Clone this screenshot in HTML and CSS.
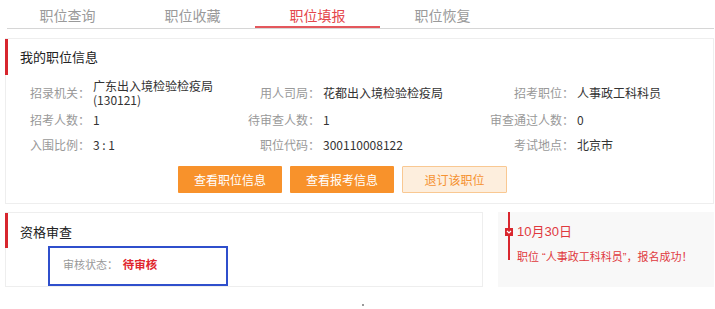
FILE: index.html
```html
<html>
<head>
<meta charset="utf-8">
<link rel="stylesheet" href="styles.css">
</head>
<body>
  <div class="tabs">
    <div class="tab-list">
      <a class="tab">职位查询</a>
      <a class="tab">职位收藏</a>
      <a class="tab active">职位填报</a>
      <a class="tab">职位恢复</a>
    </div>
  </div>

  <div class="card">
    <div class="card-title">我的职位信息</div>
    <div class="info-grid">
      <span class="lbl">招录机关：</span>
      <span class="val">广东出入境检验检疫局(130121)</span>
      <span class="lbl">用人司局：</span>
      <span class="val">花都出入境检验检疫局</span>
      <span class="lbl">招考职位：</span>
      <span class="val">人事政工科科员</span>

      <span class="lbl">招考人数：</span>
      <span class="val">1</span>
      <span class="lbl">待审查人数：</span>
      <span class="val">1</span>
      <span class="lbl">审查通过人数：</span>
      <span class="val">0</span>

      <span class="lbl">入围比例：</span>
      <span class="val">3 : 1</span>
      <span class="lbl">职位代码：</span>
      <span class="val">300110008122</span>
      <span class="lbl">考试地点：</span>
      <span class="val">北京市</span>
    </div>
    <div class="actions">
      <a class="btn">查看职位信息</a>
      <a class="btn">查看报考信息</a>
      <a class="btn btn-light">退订该职位</a>
    </div>
  </div>

  <div class="bottom-row">
    <div class="card card-review">
      <div class="card-title">资格审查</div>
      <div class="status-box">
        <span class="status-lbl">审核状态：</span>
        <span class="status-val">待审核</span>
      </div>
    </div>

    <div class="timeline">
      <div class="tl-item">
        <span class="tl-marker">
          <svg width="8" height="8" viewBox="0 0 8 8"><rect width="8" height="8" fill="#d9262e"/><polyline points="2,3 4,5 6,3" fill="none" stroke="#fff" stroke-width="1.2"/></svg>
        </span>
        <div class="tl-date">10月30日</div>
        <div class="tl-msg">职位 “人事政工科科员”，报名成功！</div>
      </div>
    </div>
  </div>

  <div class="foot"><span class="dot"></span></div>
</body>
</html>
```

FILE: styles.css
```css
body {
  margin: 0;
  background: #fff;
  font-family: "Noto Sans CJK SC", "Liberation Sans", sans-serif;
  font-size: 12px;
  color: #333;
}

a {
  cursor: pointer;
  text-decoration: none;
}

/* tabs */
.tabs {
  margin: 0 1px 0 7px;
  height: 28px;
  border-bottom: 1px solid #d6d6d6;
}

.tab-list {
  display: flex;
  margin-left: -2px;
}

.tab {
  width: 125px;
  height: 28px;
  line-height: 30px;
  text-align: center;
  font-size: 14px;
  color: #9a9a9a;
  box-sizing: border-box;
}

.tab.active {
  color: #e4474c;
  border-bottom: 2px solid #e4575c;
}

/* cards */
.card {
  margin: 9px 1px 0 5px;
  border: 1px solid #eeeeee;
  padding-bottom: 10px;
}

.card-title {
  margin-left: -1px;
  height: 36px;
  line-height: 36px;
  padding-left: 12px;
  border-left: 3px solid #d7262e;
  font-size: 13px;
  color: #222;
}

.info-grid {
  display: grid;
  grid-template-columns: 87px 140px 90px 157px 97px auto;
  grid-template-rows: 28px 25px 25px;
  align-items: center;
  margin-top: 4px;
  line-height: 14px;
}

.lbl {
  text-align: right;
  padding-right: 3px;
  color: #999;
}

.val {
  color: #333;
}

.actions {
  display: flex;
  gap: 8px;
  padding-left: 172px;
  margin-top: 9px;
}

.btn {
  width: 104px;
  height: 27px;
  line-height: 27px;
  text-align: center;
  background: #f8922b;
  color: #fff;
  border-radius: 1px;
}

.btn-light {
  width: 105px;
  box-sizing: border-box;
  line-height: 25px;
  background: #fdeedd;
  border: 1px solid #f9c892;
  color: #f59231;
}

/* bottom row */
.bottom-row {
  display: flex;
  gap: 15px;
  margin: 8px 1px 0 5px;
}

.card-review {
  margin: 0;
  width: 478px;
  box-sizing: border-box;
  padding-bottom: 0;
}

.card-review .card-title {
  height: 35px;
  line-height: 37px;
}

.status-box {
  margin: -2px 0 0 42px;
  width: 180px;
  height: 40px;
  box-sizing: border-box;
  border: 2px solid #2f4fcc;
  padding-left: 13px;
  line-height: 32px;
}

.status-lbl {
  font-size: 11px;
  color: #999;
}

.status-val {
  margin-left: 2px;
  font-size: 11.5px;
  color: #e0262e;
  font-weight: bold;
}

.timeline {
  flex: 1;
  height: 75px;
  background: #f8f8f8;
}

.tl-item {
  position: relative;
  margin-left: 10px;
  height: 48px;
  border-left: 2px solid #d9262e;
  padding-left: 7px;
  padding-top: 10px;
  box-sizing: border-box;
}

.tl-marker {
  position: absolute;
  left: -5px;
  top: 16px;
  width: 8px;
  height: 8px;
  line-height: 0;
}

.tl-date {
  line-height: 20px;
  font-size: 13px;
  font-family: "Liberation Sans", "Noto Sans CJK SC", sans-serif;
  color: #e0393e;
}

.tl-msg {
  margin-top: 7px;
  line-height: 16px;
  font-size: 11px;
  font-family: "Liberation Sans", "Noto Sans CJK SC", sans-serif;
  white-space: nowrap;
  color: #e0393e;
}

.foot {
  padding: 17px 0 0 362px;
}

.dot {
  display: block;
  width: 2px;
  height: 2px;
  background: #999;
}
```
